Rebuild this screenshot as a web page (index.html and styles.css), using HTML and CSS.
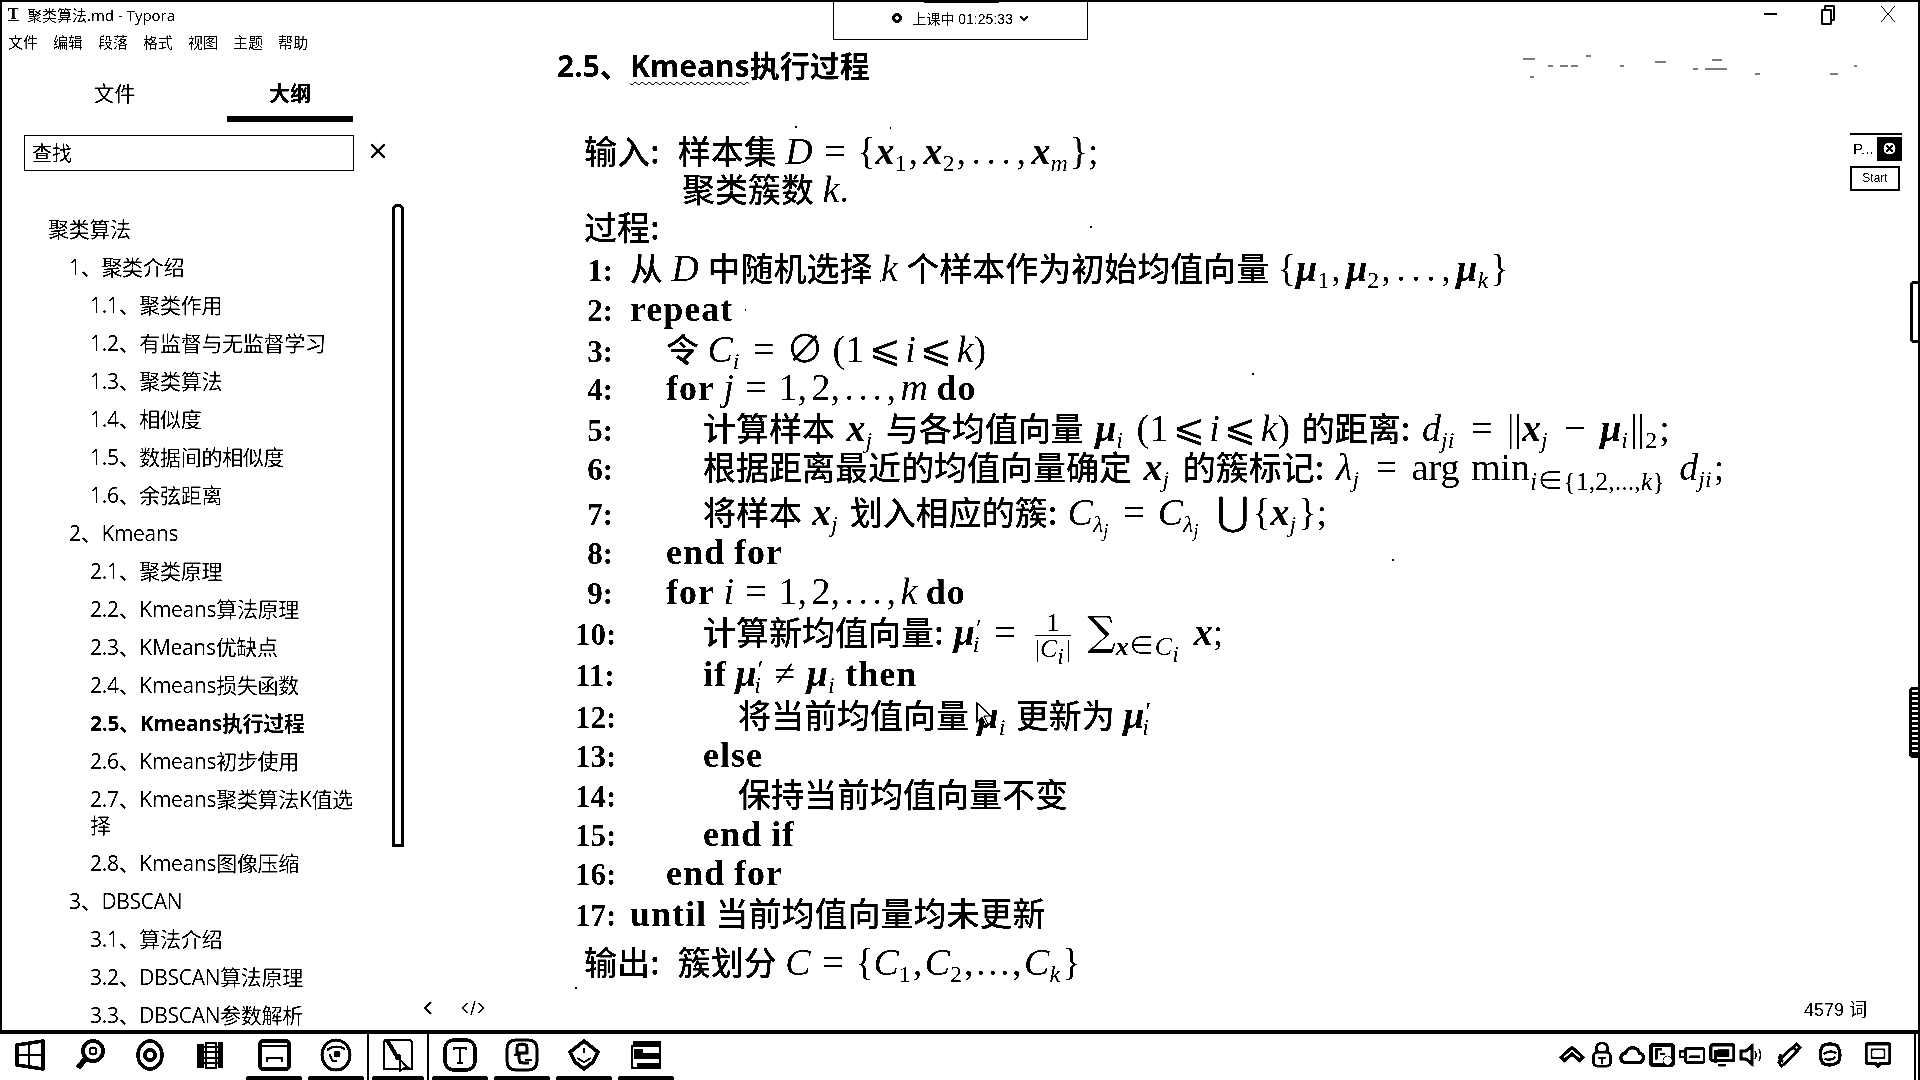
FILE: index.html
```html
<!DOCTYPE html>
<html lang="zh-CN">
<head>
<meta charset="utf-8">
<title>聚类算法.md - Typora</title>
<link rel="stylesheet" href="styles.css">
</head>
<body>
<div class="screen">
  <div class="window">
    <div class="titlebar">
      <div class="app-title"><span class="app-icon">T</span><span>聚类算法.md - Typora</span></div>
      <div class="win-controls">
        <svg class="wc" viewBox="-20 0 60 24"><path d="M6 11H19" stroke="#000" stroke-width="1.5" fill="none"/></svg>
        <svg class="wc" viewBox="-20 0 60 24"><path d="M4 7H13V21H4ZM7 7V3H16V17H13" stroke="#000" stroke-width="1.4" fill="none"/></svg>
        <svg class="wc" viewBox="-20 0 60 24"><path d="M3 3L17 19M17 3L3 19" stroke="#000" stroke-width="1" fill="none"/></svg>
      </div>
    </div>
    <div class="main">
      <aside class="sidebar">
        <nav class="menu">
          <span>文件</span><span>编辑</span><span>段落</span><span>格式</span><span>视图</span><span>主题</span><span>帮助</span>
        </nav>
        <div class="tabs">
          <div class="tab">文件</div>
          <div class="tab active">大纲</div>
        </div>
        <div class="search-row">
          <div class="search">查找</div>
          <svg class="search-x" viewBox="0 0 16 16"><path d="M2 2L14 14M14 2L2 14" stroke="#000" stroke-width="2.4" fill="none"/></svg>
        </div>
        <div class="scrollbar"></div>
        <ul class="outline">
          <li class="l1">聚类算法</li>
          <li class="l2">1、聚类介绍</li>
          <li class="l3">1.1、聚类作用</li>
          <li class="l3">1.2、有监督与无监督学习</li>
          <li class="l3">1.3、聚类算法</li>
          <li class="l3">1.4、相似度</li>
          <li class="l3">1.5、数据间的相似度</li>
          <li class="l3">1.6、余弦距离</li>
          <li class="l2">2、Kmeans</li>
          <li class="l3">2.1、聚类原理</li>
          <li class="l3">2.2、Kmeans算法原理</li>
          <li class="l3">2.3、KMeans优缺点</li>
          <li class="l3">2.4、Kmeans损失函数</li>
          <li class="l3 current">2.5、Kmeans执行过程</li>
          <li class="l3">2.6、Kmeans初步使用</li>
          <li class="l3 wrap">2.7、Kmeans聚类算法K值选择</li>
          <li class="l3">2.8、Kmeans图像压缩</li>
          <li class="l2">3、DBSCAN</li>
          <li class="l3">3.1、算法介绍</li>
          <li class="l3">3.2、DBSCAN算法原理</li>
          <li class="l3">3.3、DBSCAN参数解析</li>
        </ul>
      </aside>
      <section class="editor">
        <div class="doc">
          <h2 class="heading">2.5、<span class="wavy">Kmeans</span>执行过程</h2>
          <div class="algo">
            <div class="row head r38"><span class="cjk">输入:</span><span class="gap-s"></span><span class="cjk">样本集</span> <i>D</i> <span class="op">=</span> <span class="seq-m">{<i class="bv">x</i><sub>1</sub>, <i class="bv">x</i><sub>2</sub>, . . . , <i class="bv">x</i><i><sub>m</sub></i>};</span></div>
            <div class="row head2 r38"><span class="cjk">聚类簇数</span> <i>k</i>.</div>
            <div class="row head r41"><span class="cjk">过程:</span></div>
            <div class="row r41"><b class="num">1:</b><span class="body"><span class="cjk">从</span> <i>D</i> <span class="cjk">中随机选择</span> <i>k</i> <span class="cjk">个样本作为初始均值向量</span> <span class="seq-s">{<i class="bv">μ</i><sub>1</sub>, <i class="bv">μ</i><sub>2</sub>, . . . , <i class="bv">μ</i><i><sub>k</sub></i>}</span></span></div>
            <div class="row"><b class="num">2:</b><span class="body"><b class="kw">repeat</b></span></div>
            <div class="row"><b class="num">3:</b><span class="body in1"><span class="cjk">令</span> <i>C<sub>i</sub></i> <span class="op">=</span> ∅ <span class="seq">(1 ⩽ <i>i</i> ⩽ <i>k</i>)</span></span></div>
            <div class="row"><b class="num">4:</b><span class="body in1"><b class="kw">for</b> <i>j</i> <span class="op">=</span> <span class="seq">1, 2, . . . , <i>m</i></span> <b class="kw">do</b></span></div>
            <div class="row wide"><b class="num">5:</b><span class="body in2"><span class="cjk">计算样本</span> <i class="bv">x</i><i><sub>j</sub></i> <span class="cjk">与各均值向量</span> <i class="bv">μ</i><i><sub>i</sub></i> <span class="seq">(1 ⩽ <i>i</i> ⩽ <i>k</i>)</span> <span class="cjk">的距离:</span> <i>d<sub>ji</sub></i> <span class="op">=</span> ||<i class="bv">x</i><i><sub>j</sub></i> <span class="op">−</span> <i class="bv">μ</i><i><sub>i</sub></i>||<sub>2</sub>;</span></div>
            <div class="row r6 wide"><b class="num">6:</b><span class="body in2"><span class="cjk">根据距离最近的均值向量确定</span> <i class="bv">x</i><i><sub>j</sub></i> <span class="cjk">的簇标记:</span> <i>λ<sub>j</sub></i> <span class="op">=</span> arg min<sub class="lim"><i>i</i>∈{1,2,...,<i>k</i>}</sub> <i>d<sub>ji</sub></i>;</span></div>
            <div class="row r7 wide-s"><b class="num">7:</b><span class="body in2"><span class="cjk">将样本</span> <i class="bv">x</i><i><sub>j</sub></i> <span class="cjk">划入相应的簇:</span> <i>C<sub>λ<sub class="ss">j</sub></sub></i> <span class="op">=</span> <i>C<sub>λ<sub class="ss">j</sub></sub></i> <span class="bigop">⋃</span>{<i class="bv">x</i><i><sub>j</sub></i>};</span></div>
            <div class="row r40"><b class="num">8:</b><span class="body in1"><b class="kw">end for</b></span></div>
            <div class="row"><b class="num">9:</b><span class="body in1"><b class="kw">for</b> <i>i</i> <span class="op">=</span> <span class="seq">1, 2, . . . , <i>k</i></span> <b class="kw">do</b></span></div>
            <div class="row r42 wide-s"><b class="num">10:</b><span class="body in2"><span class="cjk">计算新均值向量:</span> <i class="bv">μ</i><span class="prime">′</span><i><sub class="ap">i</sub></i> <span class="op">=</span> <span class="frac"><span class="fn">1</span><span class="fd">|<i>C<sub>i</sub></i>|</span></span> <span class="sum">∑</span><sub class="lim"><i class="bv">x</i>∈<i>C<sub>i</sub></i></sub> <i class="bv">x</i>;</span></div>
            <div class="row r41"><b class="num">11:</b><span class="body in2"><b class="kw">if</b> <i class="bv">μ</i><span class="prime">′</span><i><sub class="ap">i</sub></i> <span class="op">≠</span> <i class="bv">μ</i><i><sub>i</sub></i> <b class="kw">then</b></span></div>
            <div class="row"><b class="num">12:</b><span class="body in3"><span class="cjk">将当前均值向量</span> <i class="bv">μ</i><i><sub>i</sub></i> <span class="cjk">更新为</span> <i class="bv">μ</i><span class="prime">′</span><i><sub class="ap">i</sub></i></span></div>
            <div class="row"><b class="num">13:</b><span class="body in2"><b class="kw">else</b></span></div>
            <div class="row"><b class="num">14:</b><span class="body in3"><span class="cjk">保持当前均值向量不变</span></span></div>
            <div class="row"><b class="num">15:</b><span class="body in2"><b class="kw">end if</b></span></div>
            <div class="row"><b class="num">16:</b><span class="body in1"><b class="kw">end for</b></span></div>
            <div class="row r49"><b class="num">17:</b><span class="body"><b class="kw">until</b> <span class="cjk">当前均值向量均未更新</span></span></div>
            <div class="row head r48"><span class="cjk">输出:</span><span class="gap-s"></span><span class="cjk">簇划分</span> <i>C</i> <span class="op">=</span> <span class="seq-l">{<i>C</i><sub>1</sub>, <i>C</i><sub>2</sub>, . . . , <i>C<sub>k</sub></i>}</span></div>
          </div>
        </div>
        <footer class="statusbar">
          <svg class="st-ic" viewBox="0 0 14 18"><path d="M10 3L4 9L10 15" stroke="#000" stroke-width="2.4" fill="none"/></svg>
          <svg class="st-code" viewBox="0 0 24 18"><path d="M7 4L1 9L7 14M17 4L23 9L17 14M14 2L10 16" stroke="#000" stroke-width="1.4" fill="none"/></svg>
          <span class="words">4579 词</span>
        </footer>
      </section>
    </div>
  </div>

  <div class="taskbar">
    <div class="tb-apps">
      <div class="tb-item first"><svg viewBox="0 0 34 34"><path d="M4 7L30 3V31L4 27Z" fill="#fff" stroke="#000" stroke-width="3.5" stroke-linejoin="round"/><path d="M16 5V29M4 17H30" stroke="#000" stroke-width="1.5"/></svg></div>
      <div class="tb-item first"><svg viewBox="0 0 34 34"><circle cx="20" cy="13" r="10" fill="none" stroke="#000" stroke-width="4"/><circle cx="20" cy="13" r="3.5" fill="none" stroke="#000" stroke-width="2"/><path d="M13 20L5 30" stroke="#000" stroke-width="5.5"/></svg></div>
      <div class="tb-item first"><svg viewBox="0 0 34 34"><ellipse cx="17" cy="17" rx="12" ry="14" fill="none" stroke="#000" stroke-width="3.5"/><circle cx="17" cy="17" r="5" fill="none" stroke="#000" stroke-width="4"/></svg></div>
      <div class="tb-item first"><svg viewBox="0 0 34 34"><path d="M4 6H11V30H4ZM25 4H30V30H25Z" fill="#000"/><path d="M11 9H25M11 14H25M11 20H25M11 25H25M13 5H23V30H13Z" stroke="#000" stroke-width="2" fill="none"/></svg></div>
      <div class="tb-item open gap-l"><svg viewBox="0 0 34 34"><path d="M3 6Q3 3 6 3H29Q32 3 32 6V28Q32 31 29 31H6Q3 31 3 28Z" fill="#fff" stroke="#000" stroke-width="3.5"/><path d="M4 8H31M10 24V20H25V24" stroke="#000" stroke-width="2.5" fill="none"/></svg></div>
      <div class="tb-item open"><svg viewBox="0 0 34 34"><ellipse cx="17" cy="17" rx="14" ry="15" fill="none" stroke="#000" stroke-width="3"/><path d="M8 12Q17 6 26 11M11 16Q12 25 18 23" stroke="#000" stroke-width="2.2" fill="none"/><circle cx="18" cy="16" r="3.5" fill="#000"/></svg></div>
      <div class="tb-item open active"><svg viewBox="0 0 34 34"><path d="M5 2H28Q31 2 31 5V31H3V5Q3 2 5 2Z" fill="#fff" stroke="#000" stroke-width="2"/><path d="M6 2L15 17" stroke="#000" stroke-width="4"/><circle cx="17" cy="19" r="3" fill="#000"/><path d="M18 20L26 30M19 22V33L23 30H28Z" stroke="#000" stroke-width="1.5" fill="#fff"/></svg></div>
      <div class="tb-item open"><svg viewBox="0 0 34 34"><rect x="2" y="2" width="30" height="30" rx="9" fill="#fff" stroke="#000" stroke-width="3.5"/><path d="M11 12V10H23V12M17 10V25M14 25H20" stroke="#000" stroke-width="2" fill="none"/></svg></div>
      <div class="tb-item open"><svg viewBox="0 0 34 34"><rect x="2" y="2" width="30" height="30" rx="8" fill="#fff" stroke="#000" stroke-width="3"/><path d="M12 17V9Q12 6 17 6Q22 6 22 9V15H14V21Q14 25 18 25H24" stroke="#000" stroke-width="3" fill="none"/><path d="M9 17H14M20 22H27" stroke="#000" stroke-width="2"/></svg></div>
      <div class="tb-item open"><svg viewBox="0 0 34 34"><path d="M17 3L31 14L26 24L17 31L8 24L3 14Z" fill="#fff" stroke="#000" stroke-width="3.5"/><path d="M17 10V15M10 20L17 24L24 20" stroke="#000" stroke-width="2" fill="none"/></svg></div>
      <div class="tb-item open"><svg viewBox="0 0 34 34"><path d="M4 3H32V8H4Z" fill="#000"/><path d="M3 8H31V30H3Z" fill="#fff" stroke="#000" stroke-width="2.5"/><path d="M5 11H14V15H31V21H5ZM8 25H31V29H8Z" fill="#000"/></svg></div>
    </div>
    <div class="tray">
      <svg viewBox="0 0 24 24"><path d="M2 14L12 5L22 14L19 17L12 11L5 17Z" fill="#fff" stroke="#000" stroke-width="3"/></svg>
      <svg viewBox="0 0 24 28"><circle cx="12" cy="7" r="6" fill="#fff" stroke="#000" stroke-width="3"/><rect x="3" y="11" width="18" height="15" rx="4" fill="#fff" stroke="#000" stroke-width="3"/><path d="M8 17H16M12 17V24" stroke="#000" stroke-width="2"/></svg>
      <svg viewBox="0 0 28 24"><path d="M7 20Q2 20 2 15Q2 11 7 10Q9 4 15 4Q21 5 22 10Q27 11 26 16Q26 20 21 20Z" fill="#fff" stroke="#000" stroke-width="3.5"/></svg>
      <svg viewBox="0 0 28 28"><rect x="2" y="3" width="24" height="22" rx="2" fill="#fff" stroke="#000" stroke-width="4"/><path d="M14 8H8V19M12 13H17" stroke="#000" stroke-width="2.5" fill="none"/><circle cx="20" cy="20" r="5" fill="#fff" stroke="#000"/></svg>
      <svg viewBox="0 0 28 24"><rect x="7" y="5" width="20" height="15" rx="2" fill="#fff" stroke="#000" stroke-width="3"/><path d="M1 8H7V14H1Z" fill="#fff" stroke="#000" stroke-width="2.5"/><path d="M11 14H23" stroke="#000" stroke-width="3"/></svg>
      <svg viewBox="0 0 28 26"><rect x="2" y="2" width="25" height="17" rx="2" fill="#fff" stroke="#000" stroke-width="3.5"/><rect x="9" y="7" width="13" height="8" fill="#000"/><path d="M7 8V22M10 24H18" stroke="#000" stroke-width="3"/></svg>
      <svg viewBox="0 0 26 24"><path d="M2 8H7L13 3V21L7 16H2Z" fill="#fff" stroke="#000" stroke-width="3"/><path d="M16 8Q18 12 16 16M20 6Q23 12 20 18" stroke="#000" stroke-width="1.6" fill="none"/></svg>
      <svg viewBox="0 0 28 28"><path d="M22 2L26 6L11 22L6 26L3 22L7 16Z" fill="#fff" stroke="#000" stroke-width="3"/><path d="M5 13Q2 20 8 21M18 5L24 11" stroke="#000" stroke-width="3" fill="none"/></svg>
      <svg viewBox="0 0 28 28"><path d="M6 4Q14 0 22 4Q27 13 23 22Q14 27 6 23Q1 13 6 4Z" fill="#fff" stroke="#000" stroke-width="3.5"/><path d="M7 13Q14 8 21 12M8 18Q15 21 20 16" stroke="#000" stroke-width="2.5" fill="none"/></svg>
      <svg viewBox="0 0 28 28"><path d="M3 2H25Q27 2 27 4V21Q27 23 25 23H17L14 26L11 23H3Q1 23 1 21V4Q1 2 3 2Z" fill="#fff" stroke="#000" stroke-width="3.5"/><rect x="7" y="8" width="14" height="9" fill="none" stroke="#000" stroke-width="2"/></svg>
    </div>
  </div>

  <div class="meeting">
    <span class="rec"></span>
    <span>上课中 01:25:33</span>
    <svg class="chev" viewBox="0 0 10 8"><path d="M1 2L5 6L9 2" stroke="#000" stroke-width="1.6" fill="none"/></svg>
  </div>

  <div class="panel">
    <div class="panel-top"><span class="panel-p">P...</span><span class="panel-x"><svg viewBox="0 0 12 12"><circle cx="6" cy="6" r="5.5" fill="#fff"/><path d="M3 3L9 9M9 3L3 9" stroke="#000" stroke-width="1.6"/></svg></span></div>
    <div class="panel-start">Start</div>
  </div>

  <div class="edge edge-a"></div>
  <div class="edge edge-b"></div>

  <svg class="specks" viewBox="0 0 1920 1080">
    <path d="M1523 59H1535M1548 66H1553M1560 66H1568M1571 66H1578M1586 56H1591M1530 77H1534M1620 66H1624M1655 62H1666M1693 69H1698M1705 69H1727M1712 60H1722M1755 74H1760M1830 74H1838M1854 66H1857" stroke="#000" stroke-width="1.2" fill="none"/>
    <path d="M795 127h2M890 128h1M880 281h1M1090 227h2M1252 374h2M1392 560h2M575 988h2M745 310h1" stroke="#000" stroke-width="2" fill="none"/>
    <path d="M977 703V722L982 717L986 725L988 724L984 716H991Z" fill="#fff" stroke="#000" stroke-width="1.2"/>
  </svg>
</div>
</body>
</html>
```

FILE: styles.css
```css
* { box-sizing: border-box; }
html, body { margin: 0; padding: 0; background: #fff; }
body { font-family: "Open Sans", "Noto Sans CJK SC", sans-serif; color: #000; }

.screen {
  position: relative;
  width: 1920px;
  height: 1080px;
  overflow: hidden;
  display: flex;
  flex-direction: column;
  background: #fff;
  filter: grayscale(1) contrast(5);
}

/* window */
.window {
  height: 1034px;
  display: flex;
  flex-direction: column;
  border-top: 2px solid #000;
  border-left: 2px solid #000;
  border-right: 2px solid #000;
  border-bottom: 4px solid #000;
}
.titlebar {
  height: 28px;
  display: flex;
  justify-content: space-between;
  align-items: center;
  padding: 0 0 0 6px;
  flex: none;
}
.app-title { display: flex; align-items: center; gap: 6px; font-size: 15px; margin-top: -4px; }
.app-icon { font-family: "Liberation Serif", serif; font-weight: 700; font-size: 16px; text-decoration: underline; width: 13px; }
.win-controls { display: flex; margin-top: -2px; }
.wc { width: 60px; height: 24px; display: block; }

.main { flex: 1; display: flex; min-height: 0; }

/* sidebar */
.sidebar { position: relative; width: 427px; flex: none; overflow: hidden; }
.menu { height: 26px; display: flex; padding-left: 6px; font-size: 15px; line-height: 24px; }
.menu span { width: 45px; }
.tabs { height: 66px; display: flex; }
.tab { width: 126px; text-align: center; font-size: 21px; line-height: 74px; height: 66px; }
.tab:first-child { width: 225px; }
.tab.active { font-weight: 700; border-bottom: 6px solid #000; }
.search-row { display: flex; align-items: center; margin: 13px 0 0 22px; height: 36px; }
.search { width: 330px; height: 36px; border: 1.5px solid #000; font-size: 20px; line-height: 35px; padding-left: 7px; }
.search-x { width: 18px; height: 18px; margin-left: 15px; margin-top: -4px; }
.scrollbar {
  position: absolute; left: 390px; top: 174px;
  width: 12px; height: 643px;
  border: 3px solid #000; border-radius: 5px 5px 0 0;
}
.outline { list-style: none; margin: 39px 0 0; padding: 0; font-size: 21px; }
.outline li { min-height: 38px; line-height: 38px; white-space: nowrap; letter-spacing: -0.3px; }
.outline .l1 { padding-left: 46px; }
.outline .l2 { padding-left: 67px; }
.outline .l3 { padding-left: 88px; }
.outline .current { font-weight: 700; }
.outline .wrap { white-space: normal; width: 358px; line-height: 26px; padding-top: 6px; padding-bottom: 6px; }

/* editor */
.editor { flex: 1; min-width: 0; display: flex; flex-direction: column; }
.doc { flex: 1; min-height: 0; overflow: hidden; }
.heading {
  margin: 16px 0 0 128px;
  height: 40px;
  font-size: 30px;
  line-height: 40px;
  font-weight: 700;
  white-space: nowrap;
}
.wavy { text-decoration: underline wavy #000 1px; text-underline-offset: 4px; }

.algo {
  margin: 45px 0 0 146px;
  font-family: "Liberation Serif", "Noto Sans CJK SC", serif;
  font-size: 38px;
  line-height: 39px;
  white-space: nowrap;
  filter: brightness(0.85) contrast(2);
}
.row { height: 39.5px; display: flex; align-items: baseline; white-space: pre-wrap; word-spacing: -1px; }
.row.wide { word-spacing: 2px; }
.row.wide-s { word-spacing: 0.5px; }
.row.r38 { height: 38px; }
.row.r40 { height: 40px; }
.row.r41 { height: 41px; }
.row.r42 { height: 42.5px; }
.row.r6 { height: 44.5px; }
.row.r7 { height: 40.5px; }
.row.r49 { height: 49px; }
.row.r48 { height: 48px; }
.row.head { display: block; padding-left: 9px; }
.row.head2 { display: block; padding-left: 107px; }
.gap-s { display: inline-block; width: 18px; }
.num { width: 38px; text-align: right; flex: none; font-size: 31px; margin-right: 17px; }
.body { display: block; white-space: pre; }
.in1 { padding-left: 36px; }
.in2 { padding-left: 73px; }
.in3 { padding-left: 108px; }
.cjk { font-family: "Noto Sans CJK SC", sans-serif; font-size: 33px; font-weight: 500; }
.kw { font-size: 36px; letter-spacing: 1px; }
.op { font-size: 38px; margin: 0 3px; }
.seq { word-spacing: -5px; }
.seq-s { word-spacing: -4px; }
.seq-m { word-spacing: -4px; }
.seq-l { word-spacing: -7px; }
.bv { font-weight: 700; }
.prime { font-size: 26px; vertical-align: 8px; line-height: 0; margin-left: 1px; }
sub { font-size: 24px; line-height: 0; vertical-align: -7px; margin-right: 2px; }
sub.ap { margin-left: -9px; }
sub.ss { font-size: 18px; vertical-align: -5px; margin-right: 0; }
.lim { font-size: 26px; vertical-align: -10px; margin-right: 3px; }
.bigop { font-size: 40px; font-family: "DejaVu Sans", sans-serif; margin: 0 3px 0 6px; }
.sum { font-size: 40px; font-family: "DejaVu Serif", serif; margin-left: 6px; }
.frac { display: inline-flex; flex-direction: column; align-items: center; vertical-align: middle; font-size: 26px; line-height: 25px; margin: -12px 0 -12px 6px; }
.fn { display: block; }
.fd { display: block; border-top: 1.5px solid #000; }

.statusbar {
  height: 46px;
  flex: none;
  display: flex;
  align-items: center;
  padding-top: 2px;
  font-size: 18px;
}
.st-ic { width: 14px; height: 18px; margin-left: -8px; }
.st-code { width: 24px; height: 18px; margin-left: 26px; }
.words { margin-left: auto; margin-right: 51px; font-family: "Liberation Sans", "Noto Sans CJK SC", sans-serif; }

/* taskbar */
.taskbar {
  flex: 1;
  display: flex;
  justify-content: space-between;
  border-right: 6px double #000;
}
.tb-apps { display: flex; align-items: stretch; }
.tb-item { width: 62px; height: 46px; display: flex; align-items: center; justify-content: center; position: relative; padding-bottom: 4px; }
.tb-item.first { width: 60px; }
.tb-item.gap-l { margin-left: 3px; }
.tb-item svg { width: 34px; height: 34px; }
.tb-item.open::after {
  content: ""; position: absolute; left: 3px; right: 3px; bottom: 0; height: 4px;
  background: #000; border-radius: 3px 3px 0 0;
}
.tb-item.active { border-left: 2px solid #000; border-right: 2px solid #000; }
.tray { display: flex; align-items: center; gap: 4px; padding-right: 23px; padding-bottom: 4px; }
.tray svg { width: 26px; height: 26px; }
.tray svg:nth-child(8) { margin-left: 7px; }
.tray svg:nth-child(9) { margin-left: 11px; }
.tray svg:nth-child(10) { margin-left: 18px; }

/* overlays */
.meeting {
  position: absolute; left: 833px; top: 2px;
  width: 255px; height: 38px;
  border: 1px solid #000; border-top: 0;
  display: flex; align-items: center; justify-content: center; gap: 6px;
  font-size: 14px; font-family: "Liberation Sans", "Noto Sans CJK SC", sans-serif;
  padding-bottom: 5px;
  background: #fff;
}
.meeting::before {
  content: ""; position: absolute; left: 90px; top: -2px; width: 75px; height: 3px; background: #000;
}
.rec { width: 10px; height: 10px; border-radius: 50%; border: 3px solid #000; margin-right: 4px; }
.chev { width: 10px; height: 8px; }

.panel {
  position: absolute; left: 1850px; top: 133px;
  width: 52px;
  border-top: 2px solid #000;
  font-family: "Liberation Sans", sans-serif;
}
.panel-top { display: flex; justify-content: space-between; align-items: center; height: 26px; font-size: 15px; padding-top: 1px; }
.panel-p { padding-left: 3px; }
.panel-x { width: 25px; height: 24px; background: #000; display: flex; align-items: center; justify-content: center; }
.panel-x svg { width: 13px; height: 13px; }
.panel-start {
  margin-top: 5px; height: 25px; width: 50px;
  border: 2px solid #000;
  font-size: 12px; line-height: 21px; text-align: center;
}

.edge { position: absolute; right: 2px; background: #fff; border: 3px solid #000; border-right: 0; border-radius: 4px 0 0 4px; }
.edge-a { top: 281px; height: 62px; width: 8px; }
.edge-b {
  top: 687px; height: 71px; width: 9px;
  background: repeating-linear-gradient(0deg, #000 0 3px, #fff 3px 5px);
}
.specks { position: absolute; left: 0; top: 0; width: 1920px; height: 1080px; pointer-events: none; }
```
